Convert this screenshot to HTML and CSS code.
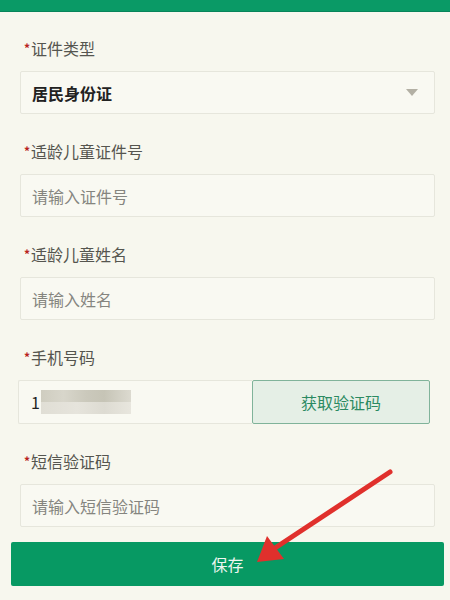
FILE: index.html
```html
<!DOCTYPE html>
<html lang="zh-CN">
<head>
<meta charset="utf-8">
<link rel="stylesheet" href="styles.css">
</head>
<body>
<div class="topbar"></div>
<form class="form">
  <div class="field">
    <div class="label"><span class="star">*</span>证件类型</div>
    <div class="box select"><span class="value">居民身份证</span><span class="caret"></span></div>
  </div>
  <div class="field">
    <div class="label"><span class="star">*</span>适龄儿童证件号</div>
    <div class="box"><span class="ph">请输入证件号</span></div>
  </div>
  <div class="field">
    <div class="label"><span class="star">*</span>适龄儿童姓名</div>
    <div class="box"><span class="ph">请输入姓名</span></div>
  </div>
  <div class="field">
    <div class="label"><span class="star">*</span>手机号码</div>
    <div class="row">
      <div class="box phone"><span class="num">1</span><span class="blur"><span class="b1"></span><span class="b2"></span></span></div>
      <div class="code">获取验证码</div>
    </div>
  </div>
  <div class="field field-last">
    <div class="label"><span class="star">*</span>短信验证码</div>
    <div class="box"><span class="ph">请输入短信验证码</span></div>
  </div>
  <div class="save">保存</div>
</form>
<svg class="arrow" width="450" height="600" viewBox="0 0 450 600">
  <line x1="390" y1="472" x2="272" y2="550" stroke="#e0302c" stroke-width="5" stroke-linecap="round"/>
  <polygon points="257,562 267,536 284,559" fill="#e0302c"/>
</svg>
</body>
</html>
```
FILE: styles.css
```css
html, body {
  margin: 0;
  padding: 0;
}
body {
  width: 450px;
  height: 600px;
  overflow: hidden;
  background: #f7f7ee;
  font-family: "Noto Sans CJK SC", "Noto Sans", sans-serif;
  position: relative;
}
.topbar {
  height: 11px;
  background: #0a9a66;
  border-bottom: 1px solid #07845a;
}
.form {
  display: flex;
  flex-direction: column;
  padding: 25px 15px 0 20px;
}
.field {
  display: flex;
  flex-direction: column;
  margin-bottom: 26px;
}
.field-last {
  margin-bottom: 15px;
}
.label {
  height: 22px;
  line-height: 22px;
  font-size: 16px;
  color: #55554f;
  margin-bottom: 12px;
  padding-left: 4px;
}
.star {
  color: #b8221d;
  font-size: 12px;
  font-weight: 700;
  vertical-align: 2px;
  margin-right: 1px;
}
.box {
  height: 41px;
  border: 1px solid #e6e6dc;
  border-radius: 2px;
  background: #f9f9f2;
  display: flex;
  align-items: center;
  padding: 0 11px;
  font-size: 16px;
}
.select {
  justify-content: space-between;
}
.value {
  font-size: 16px;
  font-weight: 700;
  color: #222;
}
.caret {
  width: 0;
  height: 0;
  border-left: 6px solid transparent;
  border-right: 6px solid transparent;
  border-top: 7px solid #b3b0a4;
  margin-right: 5px;
}
.ph {
  color: #85857f;
}
.row {
  display: flex;
  margin-left: -2px;
  margin-right: 5px;
  height: 44px;
}
.phone {
  flex: 0 0 234px;
  box-sizing: border-box;
  height: 44px;
  border-right: none;
  border-radius: 2px 0 0 2px;
  padding-left: 12px;
}
.num {
  font-size: 16px;
  color: #222;
}
.blur {
  display: flex;
  flex-direction: column;
  width: 90px;
  height: 24px;
  margin-left: 1px;
}
.b1 {
  height: 12px;
  background: linear-gradient(90deg, #cfcdc0 0%, #d8d6cb 25%, #cbc9bc 50%, #c6c4b6 70%, #dcdad0 100%);
}
.b2 {
  height: 12px;
  background: linear-gradient(90deg, #e0ded5 0%, #e6e4dc 40%, #dddbd2 70%, #e8e6de 100%);
}
.code {
  flex: 1;
  box-sizing: border-box;
  height: 44px;
  border: 1px solid #80b39a;
  border-radius: 2px;
  background: #e5efe6;
  color: #2b8a62;
  font-size: 16px;
  display: flex;
  align-items: center;
  justify-content: center;
}
.save {
  margin: 0 -9px 0 -9px;
  height: 44px;
  background: #079963;
  border-radius: 2px;
  color: #eef6f0;
  font-size: 16px;
  display: flex;
  align-items: center;
  justify-content: center;
}
.arrow {
  position: absolute;
  left: 0;
  top: 0;
  pointer-events: none;
}
```
